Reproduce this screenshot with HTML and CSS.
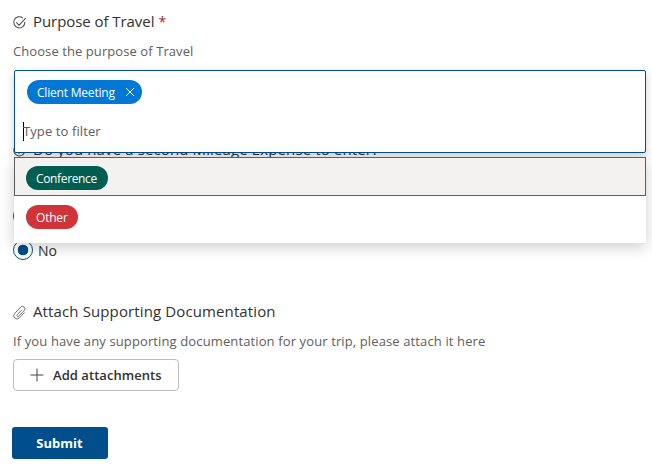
FILE: index.html
```html
<!DOCTYPE html>
<html lang="en">
<head>
    <meta charset="UTF-8">
    <meta name="viewport" content="width=device-width, initial-scale=1.0">
    <title>Travel Expense Form</title>
    <link rel="stylesheet" href="styles.css">
</head>
<body>
    <form class="form">
        <div class="question purpose">
            <div class="title">
                <svg class="icon" viewBox="0 0 14 14">
                    <path d="M10.2 2.9A5.2 5.2 0 1 0 12 6.6M4 6.9l2.6 2.7 6.2-6.7"/>
                </svg>
                <span class="title-text title-purpose">Purpose of Travel</span><span class="required">*</span>
            </div>
            <p class="desc desc-purpose">Choose the purpose of Travel</p>
            <div class="field">
                <div class="picker">
                    <div class="picker-box">
                        <span class="tag tag-blue"><span>Client Meeting</span>
                            <svg class="close" viewBox="0 0 10 10"><path d="M1 1l8 8M9 1l-8 8"/></svg>
                        </span>
                        <div class="filter">Type to filter</div>
                    </div>
                    <div class="options">
                        <div class="option selected"><span class="tag tag-green">Conference</span></div>
                        <div class="option"><span class="tag tag-red">Other</span></div>
                    </div>
                </div>
            </div>
        </div>

        <div class="question mileage">
            <div class="title">
                <svg class="icon" viewBox="0 0 14 14">
                    <path d="M10.2 2.9A5.2 5.2 0 1 0 12 6.6M4 6.9l2.6 2.7 6.2-6.7"/>
                </svg>
                <span class="title-text title-mileage">Do you have a second Mileage Expense to enter?</span>
            </div>
            <div class="choices">
                <div class="choice"><span class="radio"></span></div>
                <div class="choice"><span class="radio checked"></span>No</div>
            </div>
        </div>

        <div class="question attach">
            <div class="title">
                <svg class="icon clip" viewBox="0 0 14 14">
                    <path d="M9 4.700L4.900 9.100M4.900 9.100a1 1 0 0 0 1.600 1.300L11.400 5.200a2.300 2.300 0 0 0-3.400-3.200L2.500 7.900a3 3 0 0 0 4.300 4.200L11.700 7"/>
                </svg>
                <span class="title-text title-attach">Attach Supporting Documentation</span>
            </div>
            <p class="desc desc-attach">If you have any supporting documentation for your trip, please attach it here</p>
            <button type="button" class="add">
                <svg class="plus" viewBox="0 0 14 14"><path d="M7 .5v13M.5 7h13"/></svg>
                <span>Add attachments</span>
            </button>
        </div>

        <button type="button" class="submit">Submit</button>
    </form>
</body>
</html>
```
FILE: styles.css
```css
*{
    box-sizing: border-box;
}
body{
    margin: 0;
    background-color: white;
    color: #323130;
    font-family: "Segoe UI", "Open Sans", "Noto Sans", sans-serif;
    font-size: 13px;
    overflow: hidden;
}
.form{
    height: 470px;
    padding: 11px 6px 0 12px;
}
.title{
    display: flex;
    align-items: center;
    height: 20px;
    font-size: 15px;
    white-space: nowrap;
}
.title-text{
    letter-spacing: 0.12px;
}
.title-purpose{
    letter-spacing: -0.06px;
}
.icon{
    flex: none;
    width: 15px;
    height: 15px;
    margin: 2px 6px 0 0;
    fill: none;
    stroke: #484644;
    stroke-width: 0.95;
}
.clip{
    stroke: #605e5c;
    stroke-width: 0.8;
}
.required{
    margin-left: 4px;
    font-size: 14px;
    color: #a4262c;
}
.desc{
    height: 20px;
    margin: 10px 0 0 1px;
    line-height: 20px;
    letter-spacing: 0.08px;
    color: #605e5c;
    white-space: nowrap;
}
.desc-attach{
    letter-spacing: 0.12px;
}
.field{
    position: relative;
    height: 68px;
    margin-top: 9px;
}
.picker{
    position: absolute;
    top: 0;
    left: 2px;
    right: 0;
    z-index: 1;
}
.picker-box{
    height: 83px;
    padding: 9px 8px 0 12px;
    background-color: white;
    border: 1.5px solid #004e8c;
    border-radius: 2px;
    box-shadow: 0 3px 10px rgba(0,0,0,0.18);
}
.tag{
    display: inline-flex;
    align-items: center;
    height: 24px;
    padding: 1px 11px 0 10px;
    border-radius: 12px;
    color: white;
    font-size: 12px;
    letter-spacing: -0.2px;
    white-space: nowrap;
}
.tag-blue{
    display: flex;
    justify-content: space-between;
    width: 115px;
    padding: 1px 7px 0 10px;
    background-color: #0078d4;
}
.tag-green{
    width: 82px;
    letter-spacing: -0.35px;
    background-color: #005e50;
}
.tag-red{
    width: 52px;
    background-color: #d13438;
}
.close{
    width: 10px;
    height: 10px;
    margin-top: -2px;
    fill: none;
    stroke: white;
}
.filter{
    width: 90px;
    height: 19px;
    margin: 18px 0 0 -4px;
    border-left: 1px solid black;
    line-height: 19px;
    text-indent: -1px;
    letter-spacing: 0.1px;
    color: #605e5c;
}
.options{
    height: 86px;
    margin-top: 4px;
    background-color: white;
    box-shadow: 0 4px 14px rgba(0,0,0,0.2);
}
.option{
    display: flex;
    align-items: center;
    height: 39px;
    padding: 2px 11px 0;
    border: 1px solid transparent;
}
.selected{
    background-color: #f3f2f1;
    border-color: #605e5c;
}
.mileage{
    height: 163px;
    padding-top: 1px;
}
.choices{
    margin-top: 40px;
}
.choice{
    display: flex;
    align-items: center;
    gap: 5px;
    height: 34px;
    padding-left: 1px;
    font-size: 14px;
}
.radio{
    width: 20px;
    height: 20px;
    border: 1px solid #323130;
    border-radius: 50%;
}
.checked{
    border: 1.3px solid #004e8c;
    background: radial-gradient(circle, #004e8c 5px, white 5.6px);
}
.add{
    display: flex;
    align-items: center;
    width: 166px;
    height: 32px;
    margin: 8px 0 0 1px;
    padding: 0 0 0 16px;
    gap: 9px;
    background-color: white;
    border: 1px solid #bebbb8;
    border-radius: 4px;
    color: #323130;
    font: 600 13px "Segoe UI", "Open Sans", "Noto Sans", sans-serif;
    letter-spacing: 0.05px;
    white-space: nowrap;
}
.plus{
    width: 14px;
    height: 14px;
    stroke: #484644;
}
.submit{
    display: block;
    width: 96px;
    height: 32px;
    margin-top: 36px;
    padding: 0 1px 0 0;
    background-color: #004e8c;
    border: none;
    border-radius: 3px;
    color: white;
    font: 700 13px "Segoe UI", "Open Sans", "Noto Sans", sans-serif;
}
```
